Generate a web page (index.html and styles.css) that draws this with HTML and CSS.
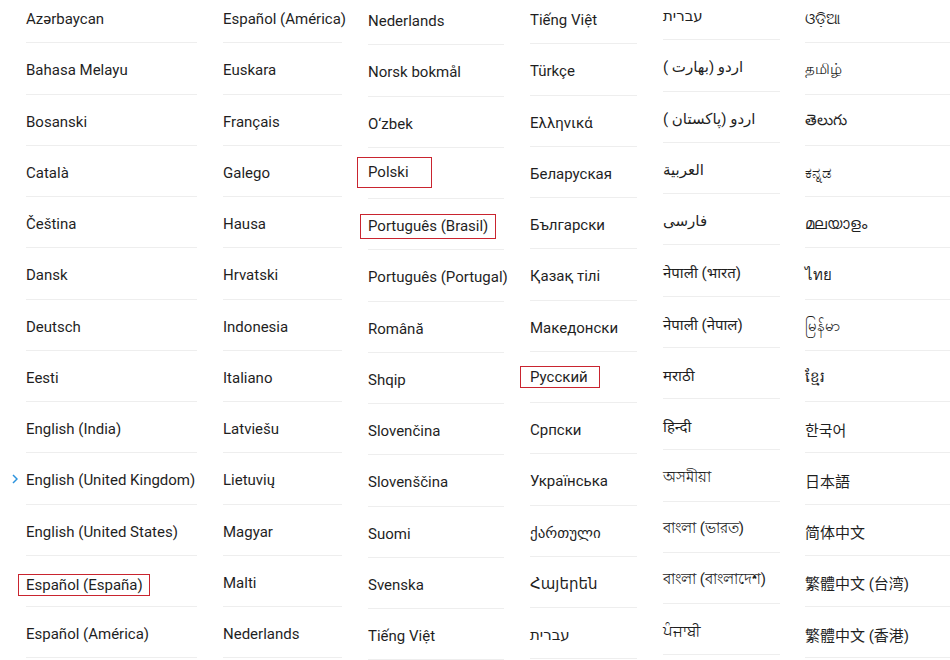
FILE: index.html
```html
<!DOCTYPE html>
<html lang="en">
<head>
    <meta charset="UTF-8">
    <meta name="viewport" content="width=device-width, initial-scale=1.0">
    <title>Languages</title>
    <link rel="stylesheet" href="styles.css">
</head>
<body>
    <div class="sheet">
        <ul class="col col-1">
            <li>Azərbaycan</li>
            <li>Bahasa Melayu</li>
            <li>Bosanski</li>
            <li>Català</li>
            <li>Čeština</li>
            <li>Dansk</li>
            <li>Deutsch</li>
            <li>Eesti</li>
            <li>English (India)</li>
            <li class="current">
                <svg class="chevron" width="6" height="10" viewBox="0 0 6 10"><polyline points="1,1 5,5 1,9" fill="none" stroke="#2c93dd" stroke-width="1.5"/></svg>
                English (United Kingdom)
            </li>
            <li>English (United States)</li>
            <li><span class="mark mark-es">Español (España)</span></li>
            <li>Español (América)</li>
        </ul>
        <ul class="col col-2">
            <li>Español (América)</li>
            <li>Euskara</li>
            <li>Français</li>
            <li>Galego</li>
            <li>Hausa</li>
            <li>Hrvatski</li>
            <li>Indonesia</li>
            <li>Italiano</li>
            <li>Latviešu</li>
            <li>Lietuvių</li>
            <li>Magyar</li>
            <li>Malti</li>
            <li>Nederlands</li>
        </ul>
        <ul class="col col-3">
            <li>Nederlands</li>
            <li>Norsk bokmål</li>
            <li>O‘zbek</li>
            <li><span class="mark mark-pl">Polski</span></li>
            <li><span class="mark mark-br">Português (Brasil)</span></li>
            <li>Português (Portugal)</li>
            <li>Română</li>
            <li>Shqip</li>
            <li>Slovenčina</li>
            <li>Slovenščina</li>
            <li>Suomi</li>
            <li>Svenska</li>
            <li>Tiếng Việt</li>
        </ul>
        <ul class="col col-4">
            <li>Tiếng Việt</li>
            <li>Türkçe</li>
            <li>Ελληνικά</li>
            <li>Беларуская</li>
            <li>Български</li>
            <li>Қазақ тілі</li>
            <li>Македонски</li>
            <li><span class="mark mark-ru">Русский</span></li>
            <li>Српски</li>
            <li>Українська</li>
            <li>ქართული</li>
            <li>Հայերեն</li>
            <li>עברית</li>
        </ul>
        <ul class="col col-5">
            <li>עברית</li>
            <li>اردو (بھارت )</li>
            <li>اردو (پاکستان )</li>
            <li>العربية</li>
            <li>فارسی</li>
            <li>नेपाली (भारत)</li>
            <li>नेपाली (नेपाल)</li>
            <li>मराठी</li>
            <li>हिन्दी</li>
            <li>অসমীয়া</li>
            <li>বাংলা (ভারত)</li>
            <li>বাংলা (বাংলাদেশ)</li>
            <li>ਪੰਜਾਬੀ</li>
        </ul>
        <ul class="col col-6">
            <li>ଓଡ଼ିଆ</li>
            <li>தமிழ்</li>
            <li>తెలుగు</li>
            <li>ಕನ್ನಡ</li>
            <li>മലയാളം</li>
            <li>ไทย</li>
            <li>မြန်မာ</li>
            <li>ខ្មែរ</li>
            <li>한국어</li>
            <li>日本語</li>
            <li>简体中文</li>
            <li>繁體中文 (台湾)</li>
            <li>繁體中文 (香港)</li>
        </ul>
    </div>
</body>
</html>
```

FILE: styles.css
```css
* {
    box-sizing: border-box;
}
body {
    margin: 0;
    background-color: #ffffff;
    font-family: Roboto, "Noto Sans", "DejaVu Sans", "Noto Sans CJK SC", sans-serif;
    font-size: 15px;
    color: #1f1f1f;
    overflow: hidden;
}
.sheet {
    display: flex;
    width: 950px;
    height: 660px;
    overflow: hidden;
}
.col {
    list-style: none;
    margin: 0;
    padding: 0 3px 0 23px;
    display: flex;
    flex-direction: column;
    flex-shrink: 0;
}
.col li {
    position: relative;
    height: 51.25px;
    flex-shrink: 0;
    display: flex;
    align-items: center;
    padding-top: 4px;
    border-bottom: 1px solid #eeeeee;
    white-space: nowrap;
}
.col-1 {
    width: 200px;
    padding-left: 26px;
    margin-top: -8px;
}
.col-2 {
    width: 145px;
    margin-top: -8px;
}
.col-3 {
    width: 162px;
    margin-top: -6px;
}
.col-4 {
    width: 133px;
    margin-top: -7px;
}
.col-5 {
    width: 143px;
    margin-top: -11px;
}
.col-6 {
    width: 167px;
    padding-left: 22px;
    padding-right: 0;
    margin-top: -8px;
}
.chevron {
    position: absolute;
    left: -14px;
    top: 21px;
}
.mark {
    display: inline-block;
    border: 1px solid #c9242f;
}
.mark-es {
    margin-left: -8px;
    padding: 1px 6px 1px 7px;
    margin-top: 4px;
}
.mark-pl {
    margin-left: -11px;
    margin-bottom: 4px;
    padding: 5px 22px 6px 10px;
}
.mark-br {
    margin-left: -8px;
    padding: 2px 7px 3px 7px;
}
.mark-ru {
    margin-left: -10px;
    margin-bottom: 4px;
    padding: 1px 11px 1px 9px;
}
```
